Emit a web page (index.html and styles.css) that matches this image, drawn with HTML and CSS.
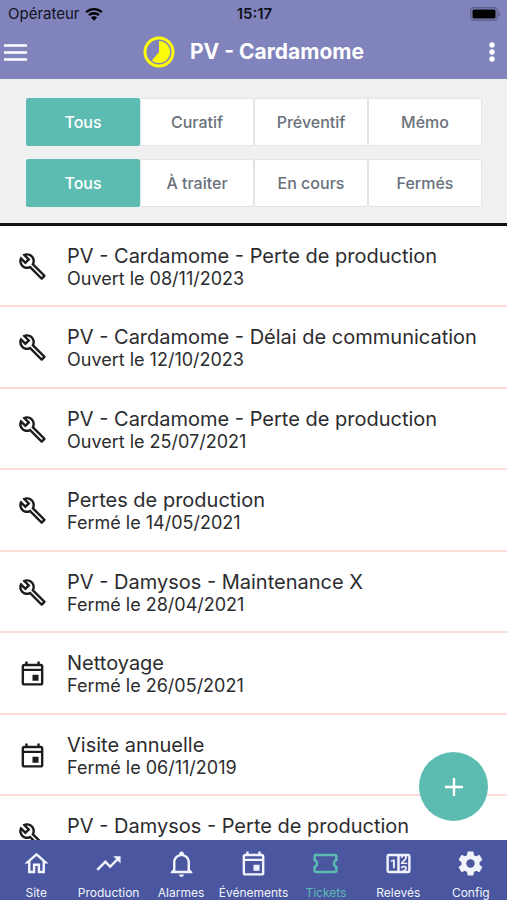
FILE: index.html
```html
<!DOCTYPE html>
<html lang="fr">
<head>
<meta charset="utf-8">
<meta name="viewport" content="width=device-width, initial-scale=1">
<title>PV - Cardamome</title>
<link rel="stylesheet" href="styles.css">
</head>
<body>
<svg class="sprite" aria-hidden="true">
  <symbol id="wrench" viewBox="0 0 24 24"><path d="M22.61,19L13.53,9.91C14.46,7.57 14,4.81 12.09,2.91C9.79,0.61 6.21,0.4 3.66,2.26L7.5,6.11L6.08,7.52L2.25,3.69C0.39,6.23 0.6,9.82 2.9,12.11C4.76,13.97 7.47,14.46 9.79,13.59L18.9,22.7C19.29,23.09 19.92,23.09 20.31,22.7L22.61,20.4C23,20 23,19.39 22.61,19M19.61,20.59L10.15,11.13C9.54,11.58 8.86,11.85 8.15,11.95C6.79,12.15 5.36,11.74 4.32,10.7C3.37,9.76 2.93,8.5 3,7.26L6.09,10.35L10.33,6.11L7.24,3C8.48,2.95 9.73,3.39 10.68,4.33C11.76,5.41 12.17,6.9 11.92,8.29C11.8,9 11.5,9.66 11.04,10.25L20.5,19.7L19.61,20.59Z"/></symbol>
  <symbol id="event" viewBox="0 0 24 24"><path d="M19 4h-1V2h-2v2H8V2H6v2H5c-1.11 0-1.99.9-1.99 2L3 20c0 1.1.89 2 2 2h14c1.1 0 2-.9 2-2V6c0-1.1-.9-2-2-2zm0 16H5V10h14v10zm0-12H5V6h14v2zM12 13h5v5h-5z"/></symbol>
</svg>

<header class="header">
  <div class="status">
    <div class="carrier"><span>Opérateur</span>
      <svg class="wifi" viewBox="0 0 18 14" aria-hidden="true"><path d="M1.200 5.200A11.500 11.500 0 0 1 16.800 5.200M4 8.200A7.300 7.300 0 0 1 14 8.200" fill="none" stroke="currentColor" stroke-width="2.400"/><path d="M9 13.800L5.800 10.600A4.600 4.600 0 0 1 12.200 10.600Z"/></svg>
    </div>
    <span class="clock">15:17</span>
    <svg class="battery" viewBox="0 0 31 14" aria-hidden="true"><rect x="0.700" y="0.700" width="26.600" height="12.600" rx="3.500" fill="none" stroke="#62608c" stroke-width="1.400"/><rect x="2.500" y="2.500" width="23" height="9" rx="1.500"/><path d="M28.500 4.500Q30.500 5 30.500 7T28.500 9.500Z" fill="#62608c"/></svg>
  </div>
  <div class="titlebar">
    <button class="icon-button" type="button" aria-label="Menu"><svg class="menu" viewBox="0 0 23 17"><path d="M0 1.500H23M0 8.500H23M0 15.500H23" stroke="currentColor" stroke-width="2.600"/></svg></button>
    <div class="heading">
      <svg class="progress" viewBox="0 0 32 32" aria-hidden="true"><circle cx="16" cy="16" r="14" fill="none" stroke="currentColor" stroke-width="3"/><path d="M16 16V5A11 11 0 1 1 8.900 24.400Z"/></svg>
      <h1>PV - Cardamome</h1>
    </div>
    <button class="icon-button options" type="button" aria-label="Options"><svg class="dots" viewBox="0 0 6 20"><circle cx="3" cy="3" r="2.700"/><circle cx="3" cy="10" r="2.700"/><circle cx="3" cy="17" r="2.700"/></svg></button>
  </div>
</header>

<section class="filters" aria-label="Filtres">
  <div class="segments">
    <button class="segment active" type="button">Tous</button>
    <button class="segment" type="button">Curatif</button>
    <button class="segment" type="button">Préventif</button>
    <button class="segment" type="button">Mémo</button>
  </div>
  <div class="segments">
    <button class="segment active" type="button">Tous</button>
    <button class="segment" type="button">À traiter</button>
    <button class="segment" type="button">En cours</button>
    <button class="segment" type="button">Fermés</button>
  </div>
</section>

<main class="content">
  <ul class="tickets">
    <li class="ticket"><svg class="icon"><use href="#wrench"/></svg><div><h2>PV - Cardamome - Perte de production</h2><p>Ouvert le 08/11/2023</p></div></li>
    <li class="ticket"><svg class="icon"><use href="#wrench"/></svg><div><h2>PV - Cardamome - Délai de communication</h2><p>Ouvert le 12/10/2023</p></div></li>
    <li class="ticket"><svg class="icon"><use href="#wrench"/></svg><div><h2>PV - Cardamome - Perte de production</h2><p>Ouvert le 25/07/2021</p></div></li>
    <li class="ticket"><svg class="icon"><use href="#wrench"/></svg><div><h2>Pertes de production</h2><p>Fermé le 14/05/2021</p></div></li>
    <li class="ticket"><svg class="icon"><use href="#wrench"/></svg><div><h2>PV - Damysos - Maintenance X</h2><p>Fermé le 28/04/2021</p></div></li>
    <li class="ticket"><svg class="icon"><use href="#event"/></svg><div><h2>Nettoyage</h2><p>Fermé le 26/05/2021</p></div></li>
    <li class="ticket"><svg class="icon"><use href="#event"/></svg><div><h2>Visite annuelle</h2><p>Fermé le 06/11/2019</p></div></li>
    <li class="ticket"><svg class="icon"><use href="#wrench"/></svg><div><h2>PV - Damysos - Perte de production</h2></div></li>
  </ul>
  <button class="fab" type="button" aria-label="Ajouter"><svg viewBox="0 0 18 18"><path d="M9 0V18M0 9H18" stroke="currentColor" stroke-width="2.400"/></svg></button>
</main>

<nav class="tabs">
  <a class="tab" href="#site"><svg class="icon" viewBox="0 0 24 24"><path d="M12 5.690L17 10.190V18H15V12H9V18H7V10.190L12 5.690M12 3L2 12H5V20H11V14H13V20H19V12H22"/></svg><span>Site</span></a>
  <a class="tab" href="#production"><svg class="icon" viewBox="0 0 24 24"><path d="M16,6L18.290,8.290L13.410,13.170L9.410,9.170L2,16.590L3.410,18L9.410,12L13.410,16L19.710,9.710L22,12V6H16Z"/></svg><span>Production</span></a>
  <a class="tab" href="#alarmes"><svg class="icon" viewBox="0 0 24 24"><path d="M10 21H14C14 22.100 13.100 23 12 23S10 22.100 10 21M21 19V20H3V19L5 17V11C5 7.900 7 5.200 10 4.300V4C10 2.900 10.900 2 12 2S14 2.900 14 4V4.300C17 5.200 19 7.900 19 11V17L21 19M17 11C17 8.200 14.800 6 12 6S7 8.200 7 11V18H17V11Z"/></svg><span>Alarmes</span></a>
  <a class="tab" href="#evenements"><svg class="icon"><use href="#event"/></svg><span>Événements</span></a>
  <a class="tab current" href="#tickets" aria-current="page"><svg class="icon" viewBox="0 0 24 24"><path d="M4,4A2,2 0 0,0 2,6V10C3.110,10 4,10.900 4,12A2,2 0 0,1 2,14V18A2,2 0 0,0 4,20H20A2,2 0 0,0 22,18V14C20.890,14 20,13.100 20,12A2,2 0 0,1 22,10V6C22,4.890 21.100,4 20,4H4M4,6H20V8.540C18.760,9.250 18,10.570 18,12C18,13.430 18.760,14.750 20,15.460V18H4V15.460C5.240,14.750 6,13.430 6,12C6,10.570 5.240,9.250 4,8.540V6Z"/></svg><span>Tickets</span></a>
  <a class="tab" href="#releves"><svg class="icon" viewBox="0 0 24 24"><path d="M4,4H20A2,2 0 0,1 22,6V18A2,2 0 0,1 20,20H4A2,2 0 0,1 2,18V6A2,2 0 0,1 4,4M4,6V18H11V6H4M20,18V6H18.760C19,6.540 18.950,7.070 18.950,7.130C18.880,7.800 18.410,8.500 18.240,8.750L15.910,11.300L19.230,11.280L19.240,12.500L14.040,12.470L14,11.470C14,11.470 17.050,8.240 17.200,7.950C17.340,7.670 17.910,6 16.500,6C15.270,6.050 15.410,7.300 15.410,7.300L13.870,7.310C13.870,7.310 13.880,6.650 14.250,6H13V18H15.580L15.570,17.140L16.540,17.130C16.540,17.130 17.450,16.970 17.460,16.080C17.500,15.080 16.650,15.080 16.500,15.080C16.370,15.080 15.430,15.130 15.430,15.950H13.910C13.910,15.950 13.950,13.890 16.500,13.890C19.100,13.890 18.960,15.910 18.960,15.910C18.960,15.910 19,17.160 17.850,17.630L18.370,18H20M8.920,16H7.420V10.200L5.620,10.760V9.530L8.760,8.410H8.920V16Z"/></svg><span>Relevés</span></a>
  <a class="tab" href="#config"><svg class="icon" viewBox="0 0 24 24"><path d="M12,15.500A3.500,3.500 0 0,1 8.500,12A3.500,3.500 0 0,1 12,8.500A3.500,3.500 0 0,1 15.500,12A3.500,3.500 0 0,1 12,15.500M19.430,12.970C19.470,12.650 19.500,12.330 19.500,12C19.500,11.670 19.470,11.340 19.430,11L21.540,9.370C21.730,9.220 21.780,8.950 21.660,8.730L19.660,5.270C19.540,5.050 19.270,4.960 19.050,5.050L16.560,6.050C16.040,5.660 15.500,5.320 14.870,5.070L14.500,2.420C14.460,2.180 14.250,2 14,2H10C9.750,2 9.540,2.180 9.500,2.420L9.130,5.070C8.500,5.320 7.960,5.660 7.440,6.050L4.950,5.050C4.730,4.960 4.460,5.050 4.340,5.270L2.340,8.730C2.210,8.950 2.270,9.220 2.460,9.370L4.570,11C4.530,11.340 4.500,11.670 4.500,12C4.500,12.330 4.530,12.650 4.570,12.970L2.460,14.630C2.270,14.780 2.210,15.050 2.340,15.270L4.340,18.730C4.460,18.950 4.730,19.030 4.950,18.950L7.440,17.940C7.960,18.340 8.500,18.680 9.130,18.930L9.500,21.580C9.540,21.820 9.750,22 10,22H14C14.250,22 14.460,21.820 14.500,21.580L14.870,18.930C15.500,18.670 16.040,18.340 16.560,17.940L19.050,18.950C19.270,19.030 19.540,18.950 19.660,18.730L21.660,15.270C21.780,15.050 21.730,14.780 21.540,14.630L19.430,12.970Z"/></svg><span>Config</span></a>
</nav>
</body>
</html>
```
FILE: styles.css
```css
* { box-sizing: border-box; }

body {
  margin: 0;
  height: 100vh;
  display: flex;
  flex-direction: column;
  overflow: hidden;
  background: #fff;
  color: #2c2c2e;
  font-family: Inter, "Liberation Sans", sans-serif;
}

h1, h2, p, ul { margin: 0; padding: 0; }
button { font: inherit; border: 0; padding: 0; cursor: pointer; }
svg { display: block; fill: currentColor; flex: none; }
.sprite { position: absolute; width: 0; height: 0; }
.icon { width: 29px; height: 29px; }

/* Header */
.header { background: #8184bc; flex: none; }

.status {
  display: grid;
  grid-template-columns: 1fr auto 1fr;
  align-items: center;
  height: 27px;
  padding: 0 6px 0 8px;
  color: #11121c;
  font-size: 15px;
}
.carrier { display: flex; align-items: center; gap: 5px; }
.wifi { width: 18px; height: 14px; color: #000; }
.clock { font-weight: 600; }
.battery { width: 31px; height: 14px; justify-self: end; color: #000; }

.titlebar {
  display: grid;
  grid-template-columns: 1fr auto 1fr;
  align-items: center;
  height: 52px;
  padding: 0 12px 2px 4px;
  color: #fff;
}
.icon-button { background: none; color: inherit; justify-self: start; }
.options { justify-self: end; }
.menu { width: 23px; height: 17px; }
.dots { width: 6px; height: 20px; }
.heading { display: flex; align-items: center; gap: 15px; padding-left: 8px; }
.progress { width: 32px; height: 32px; color: #fbfb0a; }
h1 { font-size: 21px; font-weight: 700; line-height: 28px; }

/* Filters */
.filters {
  flex: none;
  display: grid;
  gap: 13px;
  padding: 19px 25px 16px 26px;
  background: #f0f0f0;
  border-bottom: 3px solid #111;
}
.segments { display: grid; grid-template-columns: repeat(4, 1fr); }
.segment {
  height: 48px;
  background: #fff;
  color: #69717a;
  border: 1px solid #e2e4e5;
  border-radius: 2px;
  font-size: 16px;
  font-weight: 500;
}
.segment.active { background: #5dbcb2; border-color: #5dbcb2; color: #fff; }

/* Ticket list */
.content { flex: 1; min-height: 0; position: relative; overflow: hidden; }
.tickets { list-style: none; display: grid; grid-auto-rows: 81px 82px; }
.ticket {
  display: flex;
  align-items: flex-start;
  gap: 20px;
  padding: 18px 18px 0;
  border-bottom: 2px solid #fbdcd8;
}
.ticket .icon { margin-top: 8px; color: #1c1c1e; }
h2 { font-size: 20px; font-weight: 400; line-height: 24px; }
p { font-size: 18px; line-height: 22px; }

.fab {
  position: absolute;
  right: 19px;
  bottom: 19px;
  width: 69px;
  height: 69px;
  display: grid;
  place-items: center;
  border-radius: 50%;
  background: #5dbcb2;
  color: #fff;
}
.fab svg { width: 18px; height: 18px; }

/* Bottom tabs */
.tabs {
  flex: none;
  display: grid;
  grid-template-columns: repeat(7, 1fr);
  height: 60px;
  background: #4a569f;
}
.tab {
  display: flex;
  flex-direction: column;
  align-items: center;
  gap: 7px;
  padding-top: 9px;
  color: #f2f4fb;
  font-size: 12px;
  line-height: 16px;
  text-decoration: none;
}
.tab.current { color: #5dbcb2; }
```
